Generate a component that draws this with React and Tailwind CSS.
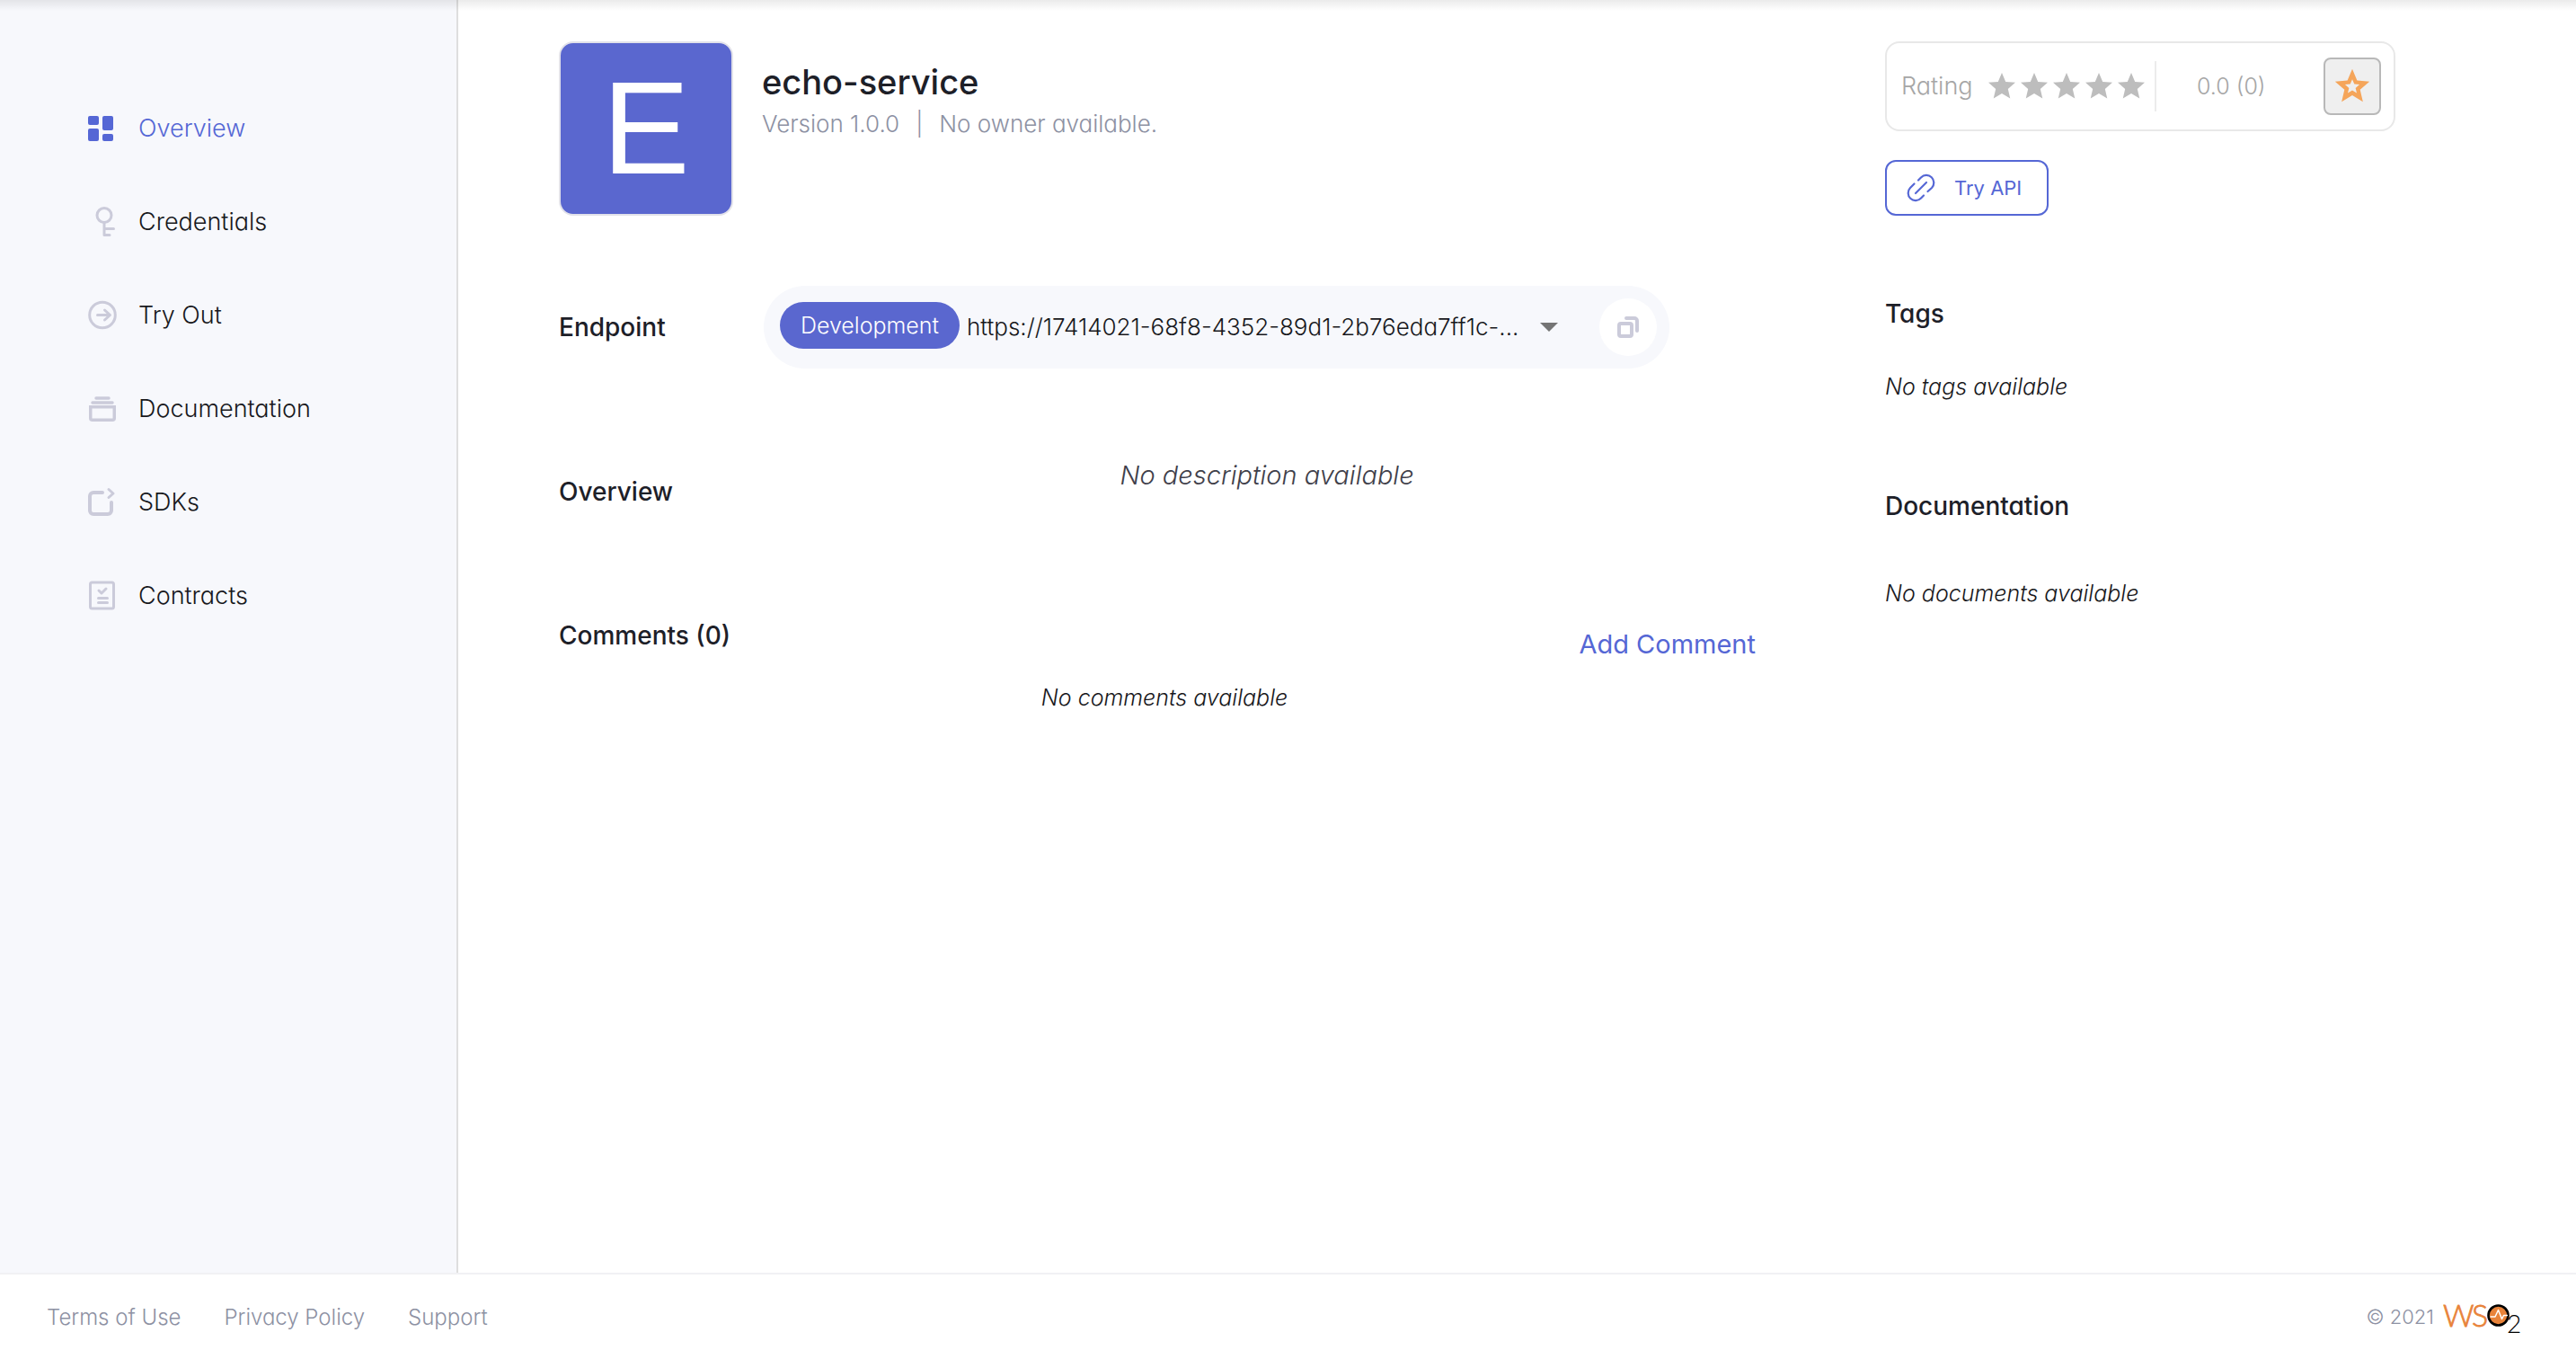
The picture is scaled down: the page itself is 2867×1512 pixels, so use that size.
import React from "react";

const STAR =
  "M12 17.27L18.18 21l-1.64-7.03L22 9.24l-7.19-.61L12 2 9.19 8.63 2 9.24l5.46 4.73L5.82 21z";

const STAR_HOLE =
  "M12 7.97L10.82 10.76 7.8 11.01 10.09 13 9.4 15.95 12 14.39 14.6 15.95 13.91 13 16.2 11.01 13.18 10.76z";

function OverviewIcon() {
  return (
    <svg width="32" height="32" viewBox="0 0 32 32" fill="#5567d5" aria-hidden="true">
      <rect x="2" y="2" width="12" height="10" rx="2" />
      <rect x="2" y="16" width="12" height="14" rx="2" />
      <rect x="18" y="2" width="12" height="16" rx="2" />
      <rect x="18" y="22" width="12" height="8" rx="2" />
    </svg>
  );
}

function CredentialsIcon() {
  return (
    <svg width="32" height="34" viewBox="0 0 32 34" fill="none" stroke="#cbcbda" strokeWidth="3" strokeLinecap="round" strokeLinejoin="round" aria-hidden="true">
      <ellipse cx="20" cy="9.500" rx="8" ry="8" />
      <path d="M20 18v13.500h6M20 24.500h10.500" />
    </svg>
  );
}

function TryOutIcon() {
  return (
    <svg width="34" height="34" viewBox="0 0 34 34" fill="none" stroke="#cbcbda" strokeWidth="3" strokeLinecap="round" strokeLinejoin="round" aria-hidden="true">
      <circle cx="18" cy="16.500" r="14.300" />
      <path d="M12.500 16.500H26M20.500 11L26.500 16.500l-6 5.500" />
    </svg>
  );
}

function DocumentationIcon() {
  return (
    <svg width="34" height="32" viewBox="0 0 34 32" fill="none" stroke="#cbcbda" strokeWidth="3.500" strokeLinecap="round" aria-hidden="true">
      <path d="M11 4h14M7 9h22" />
      <path d="M4.750 13.750h26.500v12.500a2 2 0 0 1-2 2h-22.500a2 2 0 0 1-2-2z" strokeLinecap="butt" />
    </svg>
  );
}

function SdkIcon() {
  return (
    <svg width="34" height="34" viewBox="0 0 34 34" fill="none" stroke="#cbcbda" strokeWidth="4" strokeLinecap="round" strokeLinejoin="round" aria-hidden="true">
      <path d="M18 6H8a4 4 0 0 0-4 4v16a4 4 0 0 0 4 4h16a4 4 0 0 0 4-4v-9" />
      <path d="M25 2.500l5 4.500-5 4.500" strokeWidth="3" />
    </svg>
  );
}

function ContractsIcon() {
  return (
    <svg width="34" height="34" viewBox="0 0 34 34" fill="none" stroke="#cbcbda" strokeWidth="3" strokeLinecap="round" strokeLinejoin="round" aria-hidden="true">
      <rect x="4.500" y="2" width="26" height="29" rx="2" />
      <path d="M14 11l3 3 5-5M13.500 19.500h10M13.500 24.500h10" />
    </svg>
  );
}

const NAV = [
  { label: "Overview", Icon: OverviewIcon, active: true },
  { label: "Credentials", Icon: CredentialsIcon },
  { label: "Try Out", Icon: TryOutIcon },
  { label: "Documentation", Icon: DocumentationIcon },
  { label: "SDKs", Icon: SdkIcon },
  { label: "Contracts", Icon: ContractsIcon },
];

function Sidebar() {
  return (
    <aside className="w-[510px] shrink-0 border-r-2 border-[#dedede] bg-[#f7f8fc] pt-[91px]">
      <nav>
        <ul>
          {NAV.map(({ label, Icon, active }) => (
            <li key={label}>
              <a
                href="#"
                aria-current={active ? "page" : undefined}
                className={
                  active
                    ? "flex h-[104px] items-center pl-24 text-[27px] font-light text-[#5567d5]"
                    : "flex h-[104px] items-center pl-24 text-[27px] font-light text-[#18181c]"
                }
              >
                <span className="flex w-[58px] items-center">
                  <Icon />
                </span>
                {label}
              </a>
            </li>
          ))}
        </ul>
      </nav>
    </aside>
  );
}

function SectionTitle({ children }) {
  return <h2 className="text-[28px] leading-8 font-medium text-[#1d2028]">{children}</h2>;
}

function EmptyNote({ className, children }) {
  return <p className={`${className} text-[25px] font-light text-[#18181c] italic`}>{children}</p>;
}

function Endpoint() {
  return (
    <section className="mt-[78px] flex items-center">
      <div className="w-[228px] shrink-0">
        <SectionTitle>Endpoint</SectionTitle>
      </div>
      <div className="flex h-[92px] items-center rounded-full bg-[#f7f8fc] pr-[14px] pl-[18px]">
        <span className="mb-1 flex h-[52px] w-[200px] items-center justify-center rounded-full bg-[#5a67cf] text-[25px] font-light text-white">
          Development
        </span>
        <div className="flex items-center">
          <select
            aria-label="Endpoint URL"
            className="w-[638px] appearance-none bg-transparent pl-2 text-[26px] leading-9 font-light text-[#18181c]"
          >
            <option>https://17414021-68f8-4352-89d1-2b76eda7ff1c-...</option>
          </select>
          <svg className="pointer-events-none" width="36" height="20" viewBox="0 0 36 20" aria-hidden="true">
            <path d="M8 5h20L18 15z" fill="#757575" />
          </svg>
        </div>
        <button type="button" aria-label="Copy endpoint" className="ml-[38px] flex size-16 items-center justify-center rounded-full bg-white">
          <svg width="28" height="28" viewBox="0 0 28 28" fill="none" stroke="#cbcbda" strokeWidth="4" strokeLinecap="round" strokeLinejoin="round" aria-hidden="true">
            <rect x="4" y="10" width="14" height="14" rx="2" />
            <path d="M12 4h9a3 3 0 0 1 3 3v11" />
          </svg>
        </button>
      </div>
    </section>
  );
}

function RatingCard() {
  return (
    <div className="flex h-[100px] items-center rounded-2xl border-2 border-[#e8e8e8] pr-[14px] pl-4 text-[27px] font-light text-[#a6a6a6]">
      <span className="w-[94px]">Rating</span>
      <span role="img" aria-label="0 of 5 stars" className="flex">
        {[1, 2, 3, 4, 5].map((n) => (
          <svg key={n} width="36" height="36" viewBox="0 0 24 24" fill="#bdbdbd" aria-hidden="true">
            <path d={STAR} />
          </svg>
        ))}
      </span>
      <span className="ml-2 h-14 w-0.5 bg-[#ececec]" />
      <span className="ml-[45px] text-[25px]">0.0 (0)</span>
      <button
        type="button"
        aria-label="Rate this API"
        className="ml-auto flex size-16 items-center justify-center rounded-lg border-2 border-[#b8b8b8] bg-[#efefef]"
      >
        <svg width="46" height="46" viewBox="0 0 24 24" fill="#f5a55a" fillRule="evenodd" aria-hidden="true">
          <path d={STAR + STAR_HOLE} />
        </svg>
      </button>
    </div>
  );
}

function Wso2Logo() {
  return (
    <svg width="88" height="52" viewBox="0 0 88 52" role="img" aria-label="WSO2">
      <g fontFamily="Lato, sans-serif" fill="#e8833a" stroke="#e8833a" strokeWidth="0.800">
        <text x="0" y="36" fontSize="34">W</text>
        <text x="32" y="36" fontSize="34">S</text>
      </g>
      <circle cx="61.500" cy="23.500" r="11" fill="#e8833a" stroke="#000" strokeWidth="2.600" />
      <path d="M52.500 25h5.500l3.500-7.500 4 10 2-4H72" fill="none" stroke="#fff" strokeWidth="1.500" strokeLinejoin="round" />
      <text x="71" y="43" fontSize="28" fontFamily="Lato, sans-serif" fill="#000">2</text>
    </svg>
  );
}

export default function App() {
  return (
    <div className="flex min-h-screen flex-col bg-white font-['Inter','Open_Sans',sans-serif] text-[26px] leading-8 [font-feature-settings:'cv11']">
      <div className="flex flex-1">
        <Sidebar />
        <main className="flex flex-1 gap-32 pt-[46px] pr-[201px] pl-28">
          <div className="flex-1">
            <header className="flex gap-8">
              <div className="flex size-[194px] items-center justify-center rounded-2xl border-2 border-[#e2e2ea] bg-[#5a67cf] font-['Liberation_Sans',sans-serif] text-[146px] leading-none text-white">
                E
              </div>
              <div className="pt-5">
                <h1 className="text-[38px] leading-[50px] font-medium text-[#1d2028]">echo-service</h1>
                <p className="flex gap-[18px] pt-1.5 font-light text-[#8d91a3]">
                  <span>Version 1.0.0</span>
                  <span>|</span>
                  <span>No owner available.</span>
                </p>
              </div>
            </header>

            <Endpoint />

            <section className="mt-[103px] flex">
              <div className="w-[228px] shrink-0 pt-[18px]">
                <SectionTitle>Overview</SectionTitle>
              </div>
              <p className="flex-1 text-center text-[29px] font-light text-[#40404a] italic">No description available</p>
            </section>

            <section className="mt-[128px]">
              <div className="flex items-start justify-between">
                <SectionTitle>Comments (0)</SectionTitle>
                <button type="button" className="mt-[10px] px-4 text-[29px] leading-8 text-[#5567d5]">
                  Add Comment
                </button>
              </div>
              <EmptyNote className="mt-[27px] text-center">No comments available</EmptyNote>
            </section>
          </div>

          <div className="w-[568px] shrink-0">
            <RatingCard />
            <button
              type="button"
              className="mt-8 flex h-[62px] w-[182px] items-center gap-5 rounded-xl border-2 border-[#5567d5] pl-[21px] text-[22px] text-[#5567d5]"
            >
              <svg width="34" height="34" viewBox="0 0 34 34" fill="none" stroke="#5567d5" strokeWidth="2.200" strokeLinecap="round" aria-hidden="true">
                <path d="M11 23L23 11" />
                <path d="M14 8.500l3-3a8.200 8.200 0 0 1 12 11.500l-4.500 4" />
                <path d="M20 25.500l-3 3a8.200 8.200 0 0 1-12-11.500l4.500-4.500" />
              </svg>
              Try API
            </button>

            <section className="mt-[93px]">
              <SectionTitle>Tags</SectionTitle>
              <EmptyNote className="mt-[49px]">No tags available</EmptyNote>
            </section>
            <section className="mt-[101px]">
              <SectionTitle>Documentation</SectionTitle>
              <EmptyNote className="mt-[65px]">No documents available</EmptyNote>
            </section>
          </div>
        </main>
      </div>

      <footer className="flex h-24 items-center justify-between border-t-2 border-[#f1f1f4] pt-0.5 pr-[60px] pl-[52px] text-2xl font-light text-[#8d91a3]">
        <nav className="flex gap-12">
          <a href="#">Terms of Use</a>
          <a href="#">Privacy Policy</a>
          <a href="#">Support</a>
        </nav>
        <div className="flex items-center gap-2.5">
          <span className="text-[22px]">© 2021</span>
          <Wso2Logo />
        </div>
      </footer>

      {/* Shadow cast by the app bar above the scrolled page */}
      <div className="pointer-events-none absolute inset-x-0 top-0 h-3 bg-linear-to-b from-black/8 to-transparent" />
    </div>
  );
}
